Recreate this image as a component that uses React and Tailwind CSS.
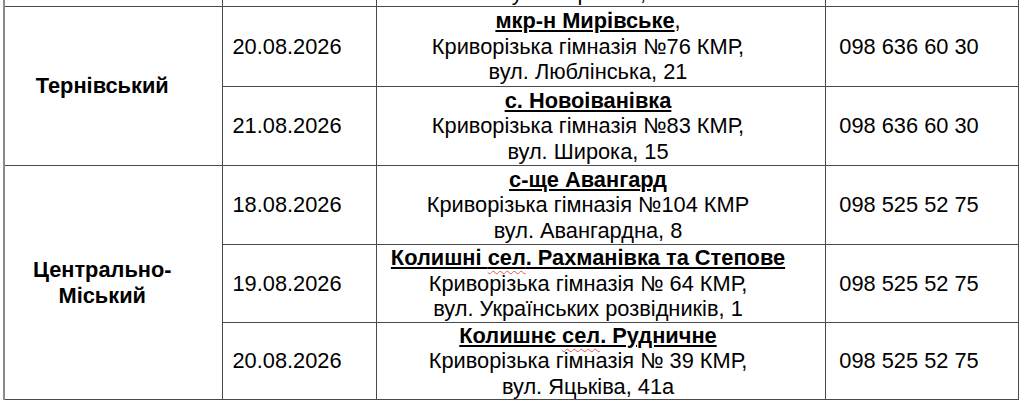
export default function App() {
  const font = { fontFamily: '"Liberation Sans", Arial, sans-serif' };
  const td = "border border-[#4a4a4a] p-0 align-middle text-center";
  const H = ({ children }) => (
    <span className="font-bold underline decoration-[1.5px] underline-offset-[2px]">{children}</span>
  );
  const Red = ({ children }) => (
    <span className="underline decoration-wavy decoration-[#e05555] decoration-[1px] underline-offset-[5px]">{children}</span>
  );
  const rows = [
    { h: 80, date: "20.08.2026", head: <><H>мкр-н Мирівське</H>,</>, l2: "Криворізька гімназія №76 КМР,", l3: "вул. Люблінська, 21", phone: "098 636 60 30" },
    { h: 79, date: "21.08.2026", head: <H>с. Новоіванівка</H>, l2: "Криворізька гімназія №83 КМР,", l3: "вул. Широка, 15", phone: "098 636 60 30" },
    { h: 79, date: "18.08.2026", head: <H>с-ще Авангард</H>, l2: "Криворізька гімназія №104 КМР", l3: "вул. Авангардна, 8", phone: "098 525 52 75" },
    { h: 76, date: "19.08.2026", head: <H>Колишні <Red>сел</Red>. Рахманівка та Степове</H>, l2: "Криворізька гімназія № 64 КМР,", l3: "вул. Українських розвідників, 1", phone: "098 525 52 75" },
    { h: 75, date: "20.08.2026", head: <H>Колишнє <Red>сел</Red>. Рудничне</H>, l2: "Криворізька гімназія № 39 КМР,", l3: "вул. Яцьківа, 41а", phone: "098 525 52 75" },
  ];
  return (
    <div className="w-[1024px] h-[400px] overflow-hidden bg-white text-black" style={font}>
      <table className="table-fixed border-collapse ml-[3px] mt-[-25px] text-[21.8px] leading-[25.5px] border-l-2 border-l-[#8a8a8a]">
        <colgroup>
          <col className="w-[218px]" />
          <col className="w-[154px]" />
          <col className="w-[449px]" />
          <col className="w-[193px]" />
        </colgroup>
        <tbody>
          <tr className="h-[31px]">
            <td className={td}></td>
            <td className={td}></td>
            <td className="border border-[#4a4a4a] p-0 align-bottom text-center pr-[24px]">
              <div className="translate-y-[-1px]">вул. Мерікова, 4а</div>
            </td>
            <td className={td}></td>
          </tr>
          {rows.map((r, i) => (
            <tr key={i} style={{ height: r.h }}>
              {i === 0 && (
                <td rowSpan={2} className={`${td} pr-[22px] font-bold`}>Тернівський</td>
              )}
              {i === 2 && (
                <td rowSpan={3} className={`${td} pr-[22px] font-bold`}>
                  Центрально-
                  <br />
                  Міський
                </td>
              )}
              <td className={`${td} pr-[24px]`}>{r.date}</td>
              <td className={`${td} pr-[25px]`}>
                <div>{r.head}</div>
                <div>{r.l2}</div>
                <div>{r.l3}</div>
              </td>
              <td className={`${td} pr-[25px]`}>{r.phone}</td>
            </tr>
          ))}
        </tbody>
      </table>
    </div>
  );
}
